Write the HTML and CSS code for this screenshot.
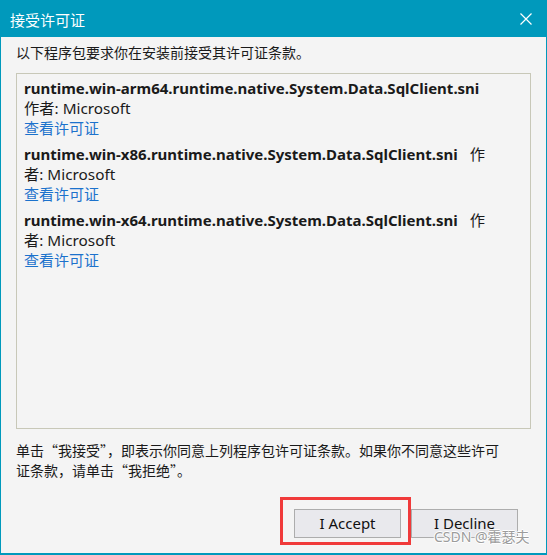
FILE: index.html
```html
<!DOCTYPE html>
<html lang="zh-CN">
<head>
<meta charset="utf-8">
<title>接受许可证</title>
<link rel="stylesheet" href="styles.css">
</head>
<body>
<div class="window">
  <div class="titlebar">
    <span class="title">接受许可证</span>
    <svg class="close" width="12" height="12" viewBox="0 0 12 12"><path d="M0.5 0.5 L11.5 11.5 M11.5 0.5 L0.5 11.5" stroke="#fff" stroke-width="1.2" fill="none"/></svg>
  </div>
  <div class="content">
    <p class="intro">以下程序包要求你在安装前接受其许可证条款。</p>
    <div class="list">
      <div class="item">
        <span class="pkg">runtime.win-arm64.runtime.native.System.Data.SqlClient.sni</span><br>
        <span class="author">作者: Microsoft</span><br>
        <span class="link">查看许可证</span>
      </div>
      <div class="item">
        <span class="pkg">runtime.win-x86.runtime.native.System.Data.SqlClient.sni</span><span class="author gap">作</span><br>
        <span class="author">者: Microsoft</span><br>
        <span class="link">查看许可证</span>
      </div>
      <div class="item">
        <span class="pkg">runtime.win-x64.runtime.native.System.Data.SqlClient.sni</span><span class="author gap">作</span><br>
        <span class="author">者: Microsoft</span><br>
        <span class="link">查看许可证</span>
      </div>
    </div>
    <p class="note">单击“我接受”，即表示你同意上列程序包许可证条款。如果你不同意这些许可<br>证条款，请单击“我拒绝”。</p>
    <div class="buttons">
      <button class="btn">I Accept</button>
      <button class="btn">I Decline</button>
    </div>
  </div>
  <div class="highlight"></div>
  <div class="watermark">CSDN @霍瑟夫</div>
</div>
</body>
</html>
```

FILE: styles.css
```css
* { box-sizing: border-box; }
html, body { margin: 0; padding: 0; background: #f4f4f4; }
body { font-family: "Noto Sans", "Noto Sans CJK SC", sans-serif; color: #1a1a1a; }

.window {
  position: relative;
  width: 547px;
  height: 555px;
  background: #f4f4f4;
  border: 1px solid #0099bc;
  border-top: none;
  border-bottom-width: 2px;
  display: flex;
  flex-direction: column;
}

.titlebar {
  height: 37px;
  margin: 0 -1px;
  background: #0099bc;
  display: flex;
  align-items: center;
  justify-content: space-between;
  padding: 0 15px 0 10px;
}
.title {
  color: #fff;
  font-family: "Noto Sans CJK SC", sans-serif;
  font-size: 15px;
  line-height: 20px;
  margin-top: 2px;
}
.close { display: block; margin-top: 1px; }

.content {
  padding: 0 15px;
  display: flex;
  flex-direction: column;
  flex: 1;
}
.intro {
  margin: 5px 0 11px;
  font-family: "Noto Sans CJK SC", sans-serif;
  font-size: 14px;
  line-height: 20px;
  color: #1a1a1a;
}
.list {
  height: 356px;
  border: 1px solid #c8c8b8;
  padding: 4px 7px 0;
}
.item {
  font-size: 15px;
  line-height: 20px;
  margin-bottom: 6px;
  white-space: nowrap;
}
.pkg {
  font-family: "Noto Sans", sans-serif;
  font-weight: 700;
  font-size: 15px;
  color: #1a1a1a;
}
.author {
  font-family: "Noto Sans", "Noto Sans CJK SC", sans-serif;
  font-size: 15.3px;
  color: #1a1a1a;
}
.gap { margin-left: 12px; }
.link {
  font-family: "Noto Sans CJK SC", sans-serif;
  font-size: 15px;
  color: #1c72cc;
}
.note {
  margin: 11px 0 0;
  font-family: "Noto Sans CJK SC", sans-serif;
  font-size: 14px;
  line-height: 20px;
  color: #1a1a1a;
  white-space: nowrap;
}
.buttons {
  margin-top: 29px;
  display: flex;
  justify-content: flex-end;
  gap: 10px;
  padding-right: 13px;
}
.btn {
  width: 107px;
  height: 29px;
  background: #e9e9ed;
  border: 1px solid #adadad;
  border-radius: 0;
  font-family: "Noto Sans", sans-serif;
  font-size: 15px;
  color: #111;
  padding: 0;
  line-height: 27px;
}

.highlight {
  position: absolute;
  left: 279px;
  top: 497px;
  width: 131px;
  height: 48px;
  border: 3px solid #f03a3a;
}
.watermark {
  position: absolute;
  left: 433px;
  top: 526px;
  font-family: "Noto Sans", "Noto Sans CJK SC", sans-serif;
  font-size: 14px;
  line-height: 22px;
  color: #9c9c9c;
  text-shadow: 1px 0 #fff, -1px 0 #fff, 0 1px #fff, 0 -1px #fff;
}
```
